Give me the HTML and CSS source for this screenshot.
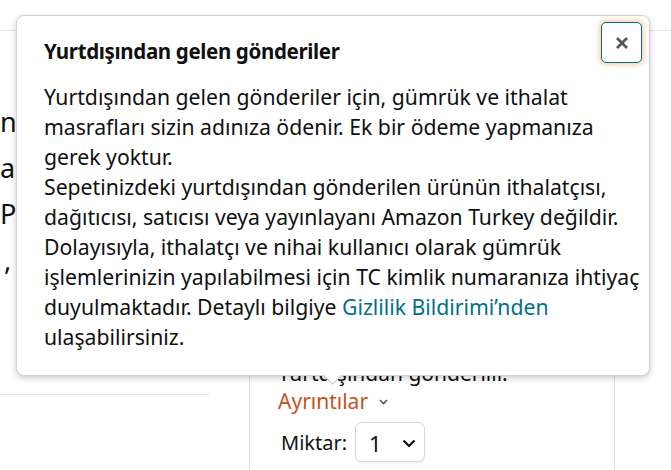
FILE: index.html
```html
<!DOCTYPE html>
<html lang="tr">
<head>
<meta charset="utf-8">
<title>Sepet</title>
<link rel="stylesheet" href="styles.css">
</head>
<body>
<div class="page">
  <header class="topbar"></header>
  <main class="main">
    <section class="left">
      <div class="big-lines">
        <div class="big">nız</div>
        <div class="big">ar</div>
        <div class="big">Pa</div>
        <div class="big comma">,</div>
      </div>
      <div class="divider"></div>
    </section>
    <aside class="buybox">
      <div class="line ship">Yurtdışından gönderilir.</div>
      <div class="line details">Ayrıntılar
        <svg class="chev-s" width="9" height="6" viewBox="0 0 9 6"><path d="M1 1l3.5 3.5L8 1" fill="none" stroke="#565959" stroke-width="1.6"/></svg>
      </div>
      <div class="qty">
        <span class="qty-label">Miktar:</span>
        <div class="dropdown">
          <span>1</span>
          <svg width="14" height="9" viewBox="0 0 14 9"><path d="M1.5 1.5l5.5 5.5 5.5-5.5" fill="none" stroke="#0f1111" stroke-width="2.2"/></svg>
        </div>
      </div>
    </aside>
  </main>

  <div class="popover" role="dialog">
    <button class="close" aria-label="Kapat">
      <svg width="14" height="14" viewBox="0 0 14 14"><path d="M2 2l10 10M12 2L2 12" stroke="#565959" stroke-width="2.8" stroke-linecap="butt"/></svg>
    </button>
    <h2 class="pop-title">Yurtdışından gelen gönderiler</h2>
    <p class="pop-body">Yurtdışından gelen gönderiler için, gümrük ve ithalat masrafları sizin adınıza ödenir. Ek bir ödeme yapmanıza gerek yoktur.<br>Sepetinizdeki yurtdışından gönderilen ürünün ithalatçısı, dağıtıcısı, satıcısı veya yayınlayanı Amazon Turkey değildir. Dolayısıyla, ithalatçı ve nihai kullanıcı olarak gümrük işlemlerinizin yapılabilmesi için TC kimlik numaranıza ihtiyaç duyulmaktadır. Detaylı bilgiye <a href="#">Gizlilik Bildirimi’nden</a> ulaşabilirsiniz.</p>
  </div>
</div>
</body>
</html>
```
FILE: styles.css
```css
html, body {
  margin: 0;
  padding: 0;
  background: #fff;
}
body {
  font-family: "Noto Sans", "Liberation Sans", sans-serif;
  color: #0f1111;
  overflow: hidden;
}
.page {
  position: relative;
  width: 671px;
  height: 470px;
  overflow: hidden;
}
.topbar {
  height: 30px;
  border-bottom: 1px solid #e3e6e6;
}
.main {
  display: flex;
  align-items: flex-start;
}
.left {
  width: 210px;
  flex: none;
}
.big-lines {
  padding-top: 68px;
  padding-left: 0;
}
.big {
  font-size: 27px;
  letter-spacing: -0.8px;
  line-height: 46px;
  white-space: nowrap;
}
.comma {
  padding-left: 4px;
}
.divider {
  margin-top: 111px;
  border-top: 1px solid #e3e6e6;
}
.buybox {
  margin-left: 39px;
  margin-top: 30px;
  width: 366px;
  box-sizing: border-box;
  height: 500px;
  border-left: 1px solid #dddddd;
  border-right: 1px solid #dddddd;
  padding: 298px 0 0 28px;
}
.line {
  font-size: 21px;
  line-height: 28px;
  white-space: nowrap;
}
.details {
  color: #c7511f;
  display: flex;
  align-items: center;
  gap: 11px;
}
.chev-s {
  margin-top: 1px;
}
.qty {
  margin-top: 7px;
  display: flex;
  align-items: center;
  gap: 8px;
  padding-left: 3px;
}
.qty-label {
  font-size: 20px;
}
.dropdown {
  width: 70px;
  height: 40px;
  box-sizing: border-box;
  border: 1px solid #d5d9d9;
  border-radius: 7px;
  background: #fff;
  box-shadow: 0 1px 2px rgba(15, 17, 17, 0.08);
  display: flex;
  align-items: center;
  justify-content: space-between;
  padding: 2px 8px 0 13px;
  font-size: 22px;
}
.dropdown svg {
  margin-top: 1px;
}

/* Popover */
.popover {
  position: absolute;
  top: 15px;
  left: 16px;
  width: 634px;
  box-sizing: border-box;
  background: #fff;
  border: 1px solid #d0d3d3;
  border-radius: 8px;
  box-shadow: 0 2px 6px rgba(15, 17, 17, 0.22);
  padding: 20px 6px 23px 27px;
}
.popover::after {
  content: "";
  position: absolute;
  left: 309px;
  bottom: -7px;
  width: 12px;
  height: 12px;
  background: #fff;
  border-right: 1px solid #c8cbcb;
  border-bottom: 1px solid #c8cbcb;
  transform: rotate(45deg);
}
.close {
  position: absolute;
  top: 6px;
  right: 7px;
  width: 41px;
  height: 41px;
  box-sizing: border-box;
  border: 1px solid #007185;
  border-radius: 5px;
  background: #fff;
  box-shadow: 0 0 4px 2px rgba(244, 153, 64, 0.45);
  display: flex;
  align-items: center;
  justify-content: center;
  padding: 0;
}
.pop-title {
  margin: 0;
  font-size: 20.5px;
  letter-spacing: -0.35px;
  line-height: 30px;
  font-weight: 700;
}
.pop-body {
  margin: 16px 0 0;
  font-size: 21.2px;
  line-height: 30px;
}
.pop-body a {
  color: #007185;
  text-decoration: none;
}
```
